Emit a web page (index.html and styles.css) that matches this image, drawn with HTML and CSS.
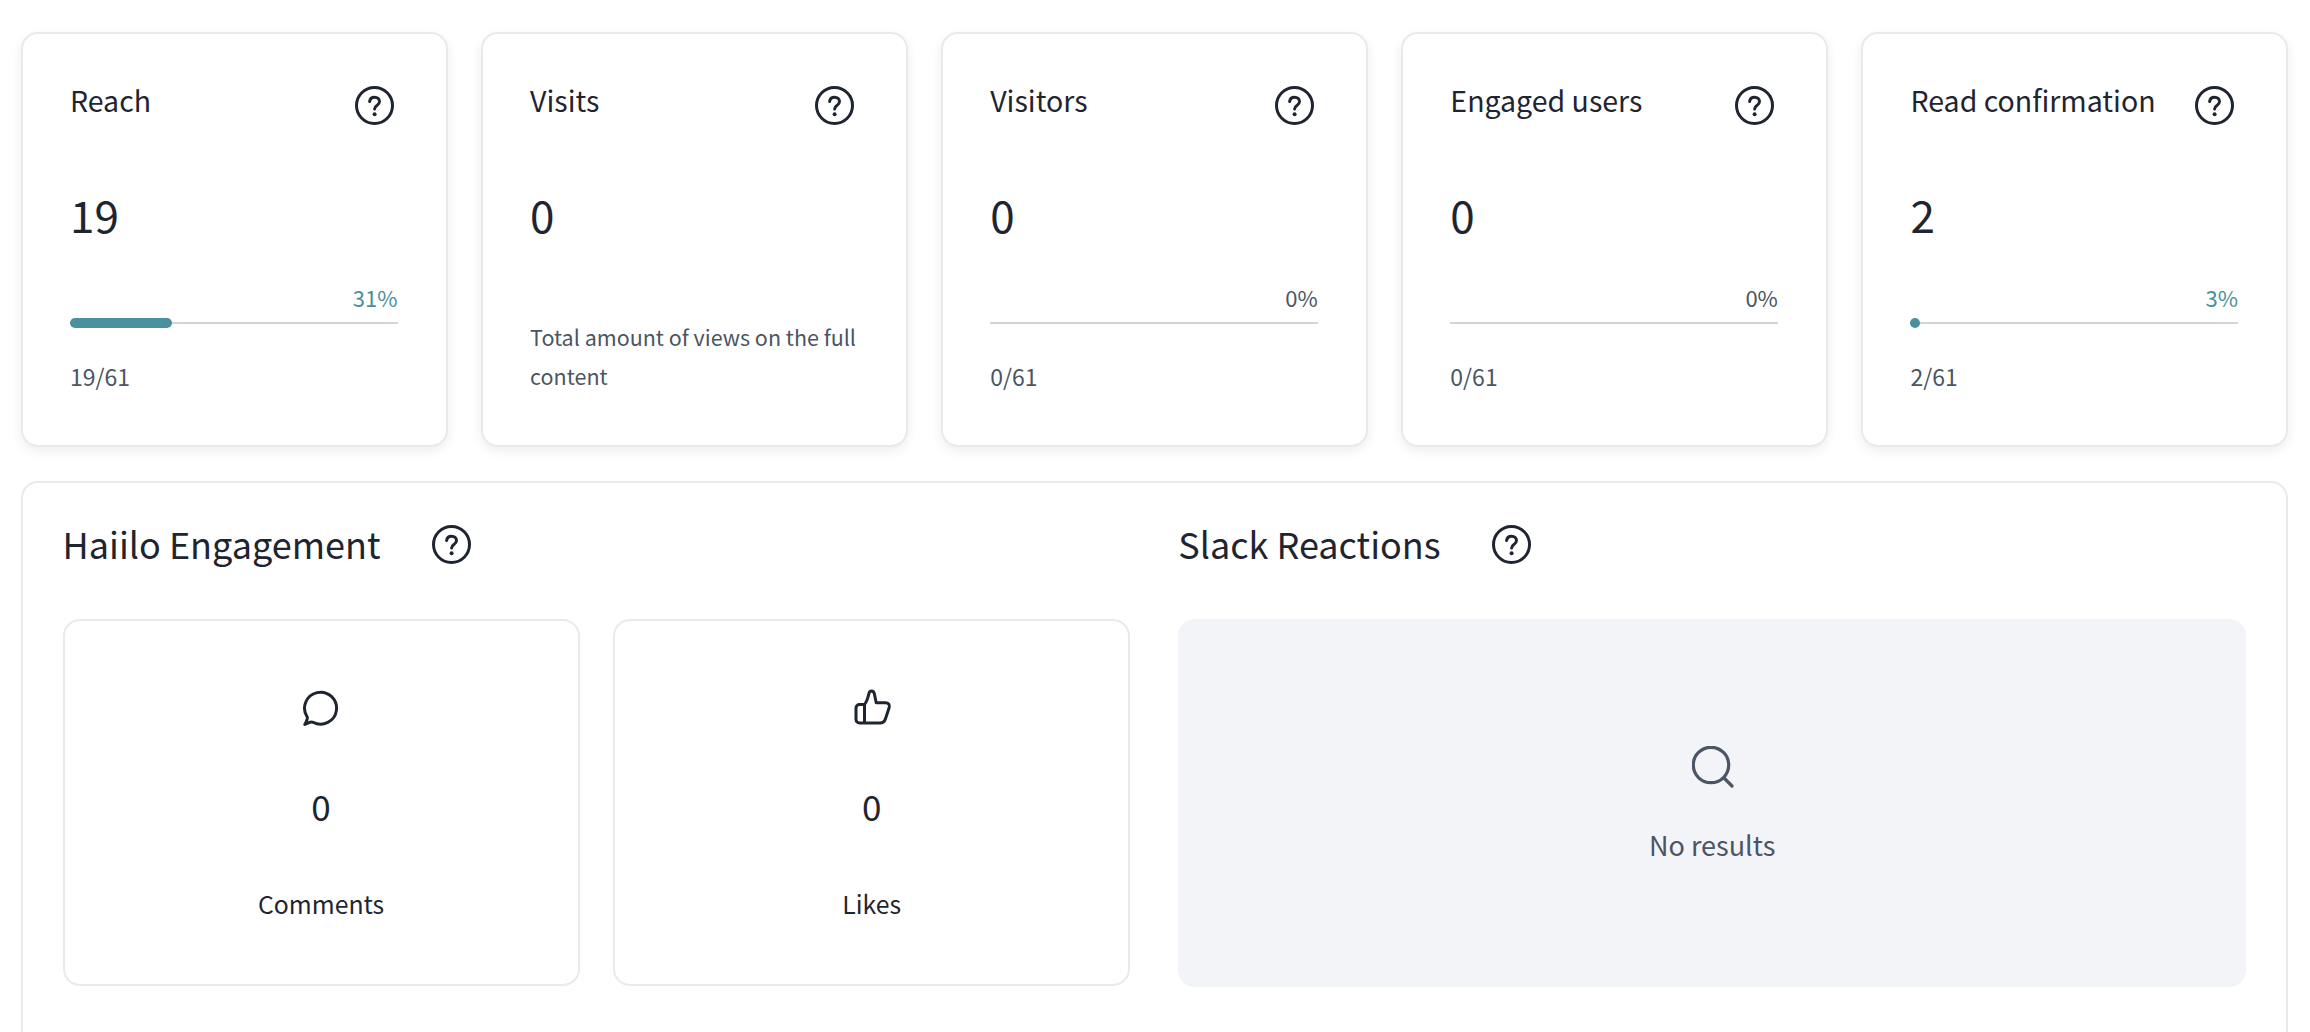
FILE: index.html
```html
<!DOCTYPE html>
<html lang="en">
<head>
<meta charset="utf-8">
<title>Statistics</title>
<link rel="stylesheet" href="styles.css">
</head>
<body>
<svg class="defs" width="0" height="0" aria-hidden="true">
  <symbol id="help" viewBox="0 0 39 39">
    <circle cx="19.5" cy="19.5" r="18" fill="none" stroke="currentColor" stroke-width="3"/>
    <path d="M14.6 15.4c.4-2.6 2.4-4.2 5-4.2 2.8 0 4.9 1.8 4.9 4.3 0 2-1.1 3-2.6 4-1.5 1-2.3 1.8-2.3 3.6" fill="none" stroke="currentColor" stroke-width="3" stroke-linecap="round"/>
    <circle cx="19.6" cy="28.2" r="2" fill="currentColor"/>
  </symbol>
</svg>
<main class="page">
  <section class="stats">
    <article class="card">
      <header class="card-head"><h3 class="card-title">Reach</h3><svg class="help"><use href="#help"/></svg></header>
      <div class="card-value">19</div>
      <div class="gauge">
        <div class="pct pct-on">31%</div>
        <div class="track"><div class="fill" style="width:31%"></div></div>
      </div>
      <div class="note">19/61</div>
    </article>
    <article class="card">
      <header class="card-head"><h3 class="card-title">Visits</h3><svg class="help"><use href="#help"/></svg></header>
      <div class="card-value">0</div>
      <div class="note note-long">Total amount of views on the full content</div>
    </article>
    <article class="card">
      <header class="card-head"><h3 class="card-title">Visitors</h3><svg class="help"><use href="#help"/></svg></header>
      <div class="card-value">0</div>
      <div class="gauge">
        <div class="pct">0%</div>
        <div class="track"></div>
      </div>
      <div class="note">0/61</div>
    </article>
    <article class="card">
      <header class="card-head"><h3 class="card-title">Engaged users</h3><svg class="help"><use href="#help"/></svg></header>
      <div class="card-value">0</div>
      <div class="gauge">
        <div class="pct">0%</div>
        <div class="track"></div>
      </div>
      <div class="note">0/61</div>
    </article>
    <article class="card">
      <header class="card-head"><h3 class="card-title">Read confirmation</h3><svg class="help"><use href="#help"/></svg></header>
      <div class="card-value">2</div>
      <div class="gauge">
        <div class="pct pct-on">3%</div>
        <div class="track"><div class="fill" style="width:3%"></div></div>
      </div>
      <div class="note">2/61</div>
    </article>
  </section>
  <section class="panel">
    <div class="column">
      <header class="section-head"><h2 class="section-title">Haiilo Engagement</h2><svg class="help"><use href="#help"/></svg></header>
      <div class="tiles">
        <div class="tile">
          <svg class="tile-icon" viewBox="0 0 40 40"><path d="M6.2 29A16 16 0 1 1 12 34.3C9.5 33.4 8.5 34.6 3.8 36.4 5.6 32.6 7 31.4 6.2 29Z" fill="none" stroke="currentColor" stroke-width="3" stroke-linejoin="round"/></svg>
          <div class="tile-value">0</div>
          <div class="tile-label">Comments</div>
        </div>
        <div class="tile">
          <svg class="tile-icon" viewBox="0 0 40 40"><path d="M12.5 16.5H7.5C5.5 16.5 4 18 4 20V31.5C4 33.5 5.5 35 7.5 35H28C30.5 35 32.6 33.4 33.4 31L37.2 19.5C38 17 36.5 14.8 33.5 14.8H24.2L22.4 6C21.5 2 17.6 2.2 16.8 6 16 9.5 14.5 14 12.5 16.5ZM12.5 16.5V35" fill="none" stroke="currentColor" stroke-width="3" stroke-linejoin="round" stroke-linecap="round"/></svg>
          <div class="tile-value">0</div>
          <div class="tile-label">Likes</div>
        </div>
      </div>
    </div>
    <div class="column">
      <header class="section-head"><h2 class="section-title">Slack Reactions</h2><svg class="help"><use href="#help"/></svg></header>
      <div class="empty">
        <svg class="empty-icon" viewBox="0 0 44 44"><circle cx="19" cy="19" r="17.7" fill="none" stroke="currentColor" stroke-width="3.2"/><path d="M32 32L40 40" fill="none" stroke="currentColor" stroke-width="3.2" stroke-linecap="round"/></svg>
        <div class="empty-text">No results</div>
      </div>
    </div>
  </section>
</main>
</body>
</html>
```
FILE: styles.css
```css
* { box-sizing: border-box; }
html, body { margin: 0; height: 100%; overflow: hidden; background: #fff; }
body {
  font-family: "Noto Sans CJK SC", "Noto Sans", sans-serif;
  color: #1f2530;
}
h2, h3 { margin: 0; font-weight: 400; }
.defs { position: absolute; }
.page { padding: 32px 22px 0 21px; }

.stats { display: grid; grid-template-columns: repeat(5, 1fr); gap: 33.6px; }
.card {
  height: 415px;
  padding: 0 48px 0 47px;
  background: #fff;
  border: 2px solid #e9eaf0;
  border-radius: 17px;
  box-shadow: 0 4px 11px rgba(31, 37, 48, 0.08);
}
.card-head { display: flex; justify-content: space-between; align-items: flex-start; padding-top: 43.5px; height: 92px; }
.card-title { font-size: 28.5px; line-height: 44px; }
.help { width: 39px; height: 39px; flex: none; color: #1f2530; margin: 8px 4px 0 0; }
.card-value { font-size: 44px; line-height: 60px; margin-top: 58px; }
.gauge { margin-top: 35.5px; }
.pct { text-align: right; font-size: 22px; line-height: 34px; color: #4b5563; }
.pct-on { color: #4a919e; }
.track { position: relative; height: 2px; margin: 8px 0; background: #d1d5db; }
.fill {
  position: absolute; left: 0; top: -4px;
  min-width: 10px; height: 10px;
  background: #4a919e; border-radius: 5px;
}
.note { font-size: 23px; line-height: 39px; color: #4b5563; margin-top: 33px; }
.note-long { font-size: 21.5px; margin-top: 73px; }

.panel {
  display: grid; grid-template-columns: 1fr 1fr; gap: 48px;
  margin-top: 34px;
  padding: 33.5px 40px 60px 39.5px;
  border: 2px solid #e9eaf0;
  border-radius: 17px;
}
.section-head { display: flex; align-items: center; gap: 51px; height: 56px; }
.section-head .help { margin: 0; }
.section-title { font-size: 36px; line-height: 56px; margin-top: -3px; }
.tiles { display: grid; grid-template-columns: 1fr 1fr; gap: 33.6px; margin-top: 46px; }
.tile {
  height: 367px;
  display: flex; flex-direction: column; align-items: center;
  border: 2px solid #e9eaf0;
  border-radius: 17px;
}
.tile-icon { width: 40px; height: 40px; margin-top: 67px; color: #1f2530; }
.tile-value { font-size: 35px; line-height: 56px; margin-top: 50.5px; }
.tile-label { font-size: 24.8px; line-height: 40px; margin-top: 48.5px; }
.empty {
  height: 368px; margin-top: 46px;
  display: flex; flex-direction: column; align-items: center;
  background: #f3f4f8; border-radius: 17px;
  color: #4b5563;
}
.empty-icon { width: 44px; height: 44px; margin: 127px 0 0 3px; }
.empty-text { font-size: 27px; line-height: 40px; margin-top: 35px; }
```
